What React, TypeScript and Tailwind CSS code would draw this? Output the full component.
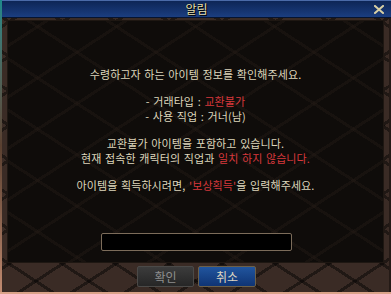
import React from "react";

const frameBg =
  "bg-[#3a2b25] bg-[image:repeating-linear-gradient(33deg,transparent_0_26px,rgba(0,0,0,0.45)_26px_29px),repeating-linear-gradient(-33deg,transparent_0_26px,rgba(0,0,0,0.45)_26px_29px)]";

const panelBg =
  "bg-[#0f0c0a] bg-[image:repeating-linear-gradient(33deg,transparent_0_40px,rgba(40,30,24,0.35)_40px_43px),repeating-linear-gradient(-33deg,transparent_0_40px,rgba(40,30,24,0.35)_40px_43px)]";

const Red = ({ children }: { children: React.ReactNode }) => (
  <span className="text-[#d8383c]">{children}</span>
);

export default function App() {
  return (
    <div
      className="w-[391px] h-[294px] overflow-hidden bg-[#dba389] flex"
      style={{ fontFamily: '"Noto Sans CJK KR", "Noto Sans", sans-serif' }}
    >
      {/* left edge of the game scene */}
      <div className="w-[2px] h-[292px] bg-gradient-to-b from-[#1a8a8a] via-[#5a4030] to-[#c08a70]" />

      {/* dialog */}
      <div className="w-[389px] h-[292px] flex flex-col">
        {/* title bar */}
        <div className="relative h-[18px] flex items-center justify-center border-t border-[#4a6aa8] border-b border-b-[#061430] bg-gradient-to-b from-[#0d2556] to-[#1b3e80]">
          <span className="text-[12px] leading-none text-[#e9e1b4] [text-shadow:0_0_1px_#000,1px_1px_0_#000]">
            알림
          </span>
          <svg
            className="absolute right-[7px] top-[4px]"
            width="10"
            height="9"
            viewBox="0 0 10 9"
          >
            <path
              d="M1 1 L9 8 M9 1 L1 8"
              stroke="#d8cfa4"
              strokeWidth="2"
              strokeLinecap="square"
            />
          </svg>
        </div>

        {/* body */}
        <div className={`flex-1 flex flex-col pl-[5px] pr-[5px] pt-[2px] border-r-2 border-[#241a16] ${frameBg}`}>
          {/* inner panel */}
          <div
            className={`h-[243px] flex flex-col items-center pt-[46px] border border-[#1e1712] ${panelBg}`}
          >
            <div className="flex flex-col items-center gap-[12px] text-[11px] leading-[15px] tracking-[0.1px] [word-spacing:1px] text-[#ded6bc]">
              <p>수령하고자 하는 아이템 정보를 확인해주세요.</p>
              <div className="flex flex-col items-center">
                <p>
                  - 거래타입 : <Red>교환불가</Red>
                </p>
                <p>- 사용 직업 : 거너(남)</p>
              </div>
              <div className="flex flex-col items-center">
                <p>교환불가 아이템을 포함하고 있습니다.</p>
                <p>
                  현재 접속한 캐릭터의 직업과 <Red>일치 하지 않습니다.</Red>
                </p>
              </div>
              <p>
                아이템을 획득하시려면, <Red>&apos;보상획득&apos;</Red>을 입력해주세요.
              </p>
            </div>
            <div className="mt-[40px] ml-[2px] w-[191px] h-[18px] bg-black border border-[#7c6c5a] rounded-[2px]" />
          </div>

          {/* buttons */}
          <div className="flex justify-center gap-[4px] pt-[3px] pl-[2px]">
            <button className="w-[57px] h-[21px] rounded-[2px] border border-[#4b4a48] bg-gradient-to-b from-[#3c3c3c] to-[#262626] text-[12px] text-[#8e8e8e]">
              확인
            </button>
            <button className="w-[58px] h-[21px] rounded-[2px] border border-[#6b604a] bg-gradient-to-b from-[#21559e] to-[#0f3474] text-[12px] text-[#ddd5c2]">
              취소
            </button>
          </div>
        </div>
      </div>
    </div>
  );
}
